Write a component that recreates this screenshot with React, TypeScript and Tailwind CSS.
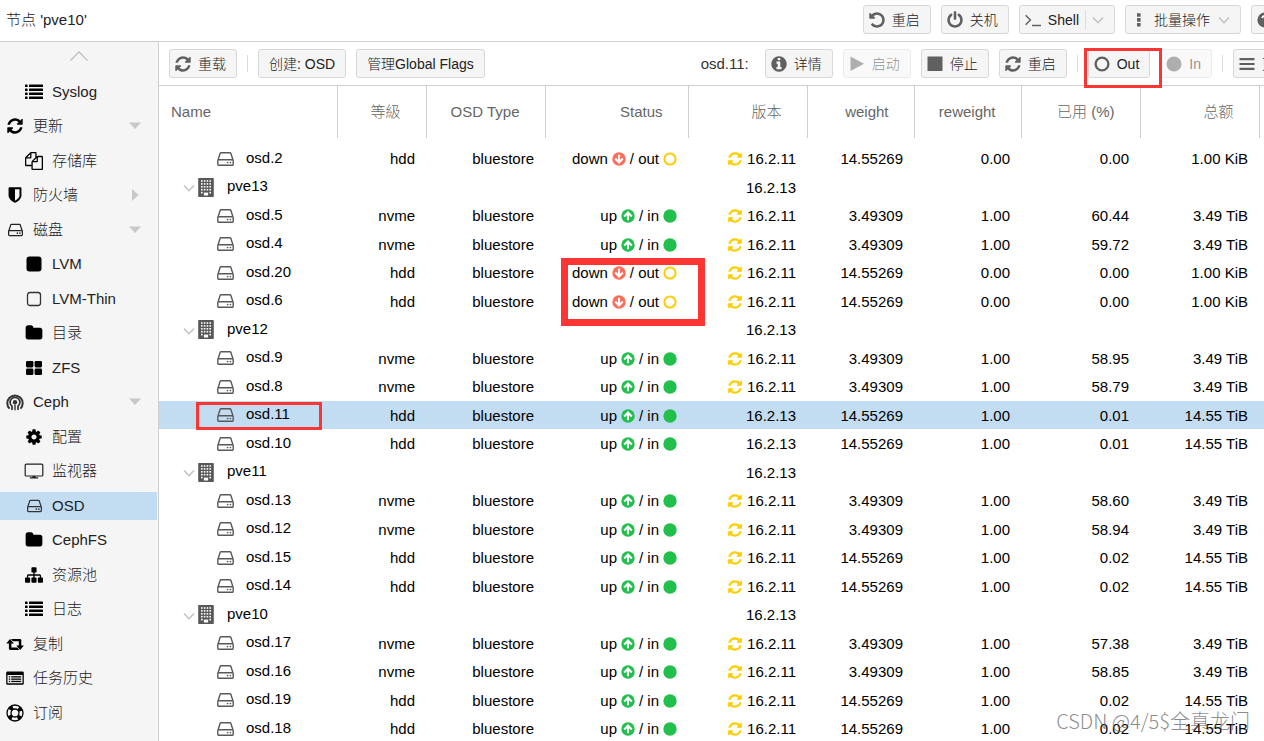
import React from "react";

type IconProps = { className?: string };

const PATHS = {
  undo: "M1664 896q0 156-61 298t-164 245-245 164-298 61q-172 0-327-72.5t-264-204.5q-7-10-6.5-22.5t8.5-20.5l137-138q10-9 25-9 16 2 23 12 73 95 179 147t225 52q104 0 198.5-40.5t163.5-109.5 109.5-163.5 40.5-198.5-40.5-198.5-109.5-163.5-163.5-109.5-198.5-40.5q-98 0-188 35.5t-160 101.5l137 138q31 30 14 69-17 40-59 40h-448q-26 0-45-19t-19-45v-448q0-42 40-59 39-17 69 14l130 129q107-101 244.5-156.5t284.5-55.5q156 0 298 61t245 164 164 245 61 298z",
  refresh:
    "M1639 1056q0 5-1 7-64 268-268 434.5t-478 166.5q-146 0-282.5-55t-243.5-157l-129 129q-19 19-45 19t-45-19-19-45v-448q0-26 19-45t45-19h448q26 0 45 19t19 45-19 45l-137 137q71 66 161 102t187 36q134 0 250-65t186-179q11-17 53-117 8-23 30-23h192q13 0 22.5 9.5t9.5 22.5zm25-800v448q0 26-19 45t-45 19h-448q-26 0-45-19t-19-45 19-45l138-138q-148-137-349-137-134 0-250 65t-186 179q-11 17-53 117-8 23-30 23h-199q-13 0-22.5-9.5t-9.5-22.5v-7q65-268 270-434.5t480-166.5q146 0 284 55.5t245 156.5l130-129q19-19 45-19t45 19 19 45z",
  power:
    "M1664 896q0 156-61 298t-164 245-245 164-298 61-298-61-245-164-164-245-61-298q0-182 80.5-343t226.5-270q43-32 95.5-25t83.5 50q32 42 24.5 94.5t-49.5 84.5q-98 74-151.5 181t-53.5 228q0 104 40.5 198.5t109.5 163.5 163.5 109.5 198.5 40.5 198.5-40.5 163.5-109.5 109.5-163.5 40.5-198.5q0-121-53.5-228t-151.5-181q-42-32-49.5-84.5t24.5-94.5q31-43 84-50t95 25q146 109 226.5 270t80.5 343zm-640-768v640q0 52-38 90t-90 38-90-38-38-90v-640q0-52 38-90t90-38 90 38 38 90z",
  info: "M1152 1376v-160q0-14-9-23t-23-9h-96v-512q0-14-9-23t-23-9h-320q-14 0-23 9t-9 23v160q0 14 9 23t23 9h96v320h-96q-14 0-23 9t-9 23v160q0 14 9 23t23 9h448q14 0 23-9t9-23zm-128-896v-160q0-14-9-23t-23-9h-192q-14 0-23 9t-9 23v160q0 14 9 23t23 9h192q14 0 23-9t9-23zm640 416q0 209-103 385.5t-279.5 279.5-385.5 103-385.5-103-279.5-279.5-103-385.5 103-385.5 279.5-279.5 385.5-103 385.5 103 279.5 279.5 103 385.5z",
  files:
    "M1696 384q40 0 68 28t28 68v1216q0 40-28 68t-68 28h-960q-40 0-68-28t-28-68v-288h-544q-40 0-68-28t-28-68v-672q0-40 20-88t48-76l408-408q28-28 76-48t88-20h416q40 0 68 28t28 68v328q68-40 128-40h416zm-544 213l-299 299h299v-299zm-640-384l-299 299h299v-299zm196 647l316-316v-416h-384v416q0 40-28 68t-68 28h-416v640h512v-256q0-40 20-88t48-76zm956 804v-1152h-384v416q0 40-28 68t-68 28h-416v640h896z",
  shield:
    "M1344 960v-640h-448v1137q119-63 213-137 235-184 235-360zm192-768v768q0 86-33.5 170.5t-83 150-118 127.5-126.5 103-121 77.5-89.5 49.5-42.5 20q-12 6-26 6t-26-6q-16-7-42.5-20t-89.5-49.5-121-77.5-126.5-103-118-127.5-83-150-33.5-170.5v-768q0-26 19-45t45-19h1152q26 0 45 19t19 45z",
  folder:
    "M1728 608v704q0 92-66 158t-158 66h-1216q-92 0-158-66t-66-158v-960q0-92 66-158t158-66h320q92 0 158 66t66 158v32h672q92 0 158 66t66 158z",
  gear: "M1152 896q0-106-75-181t-181-75-181 75-75 181 75 181 181 75 181-75 75-181zm512-109v222q0 12-8 23t-20 13l-185 28q-19 54-39 91 35 50 107 138 10 12 10 25t-9 23q-27 37-99 108t-94 71q-12 0-26-9l-138-108q-44 23-91 38-16 136-29 186-7 28-36 28h-222q-14 0-24.5-8.5t-11.5-21.5l-28-184q-49-16-90-37l-141 107q-10 9-25 9-14 0-25-11-126-114-165-168-7-10-7-23 0-12 8-23 15-21 51-66.5t54-70.5q-27-50-41-99l-183-27q-13-2-21-12.5t-8-23.5v-222q0-12 8-23t19-13l186-28q14-46 39-92-40-57-107-138-10-12-10-24 0-10 9-23 26-36 98.5-107.5t94.5-71.5q13 0 26 10l138 107q44-23 91-38 16-136 29-186 7-28 36-28h222q14 0 24.5 8.5t11.5 21.5l28 184q49 16 90 37l142-107q9-9 24-9 13 0 25 10 129 119 165 170 7 8 7 22 0 12-8 23-15 21-51 66.5t-54 70.5q26 50 41 98l183 28q13 2 21 12.5t8 23.5z",
  sitemap:
    "M1792 1248v320q0 40-28 68t-68 28h-320q-40 0-68-28t-28-68v-320q0-40 28-68t68-28h96v-192h-512v192h96q40 0 68 28t28 68v320q0 40-28 68t-68 28h-320q-40 0-68-28t-28-68v-320q0-40 28-68t68-28h96v-192h-512v192h96q40 0 68 28t28 68v320q0 40-28 68t-68 28h-320q-40 0-68-28t-28-68v-320q0-40 28-68t68-28h96v-192q0-52 38-90t90-38h512v-192h-96q-40 0-68-28t-28-68v-320q0-40 28-68t68-28h320q40 0 68 28t28 68v320q0 40-28 68t-68 28h-96v192h512q52 0 90 38t38 90v192h96q40 0 68 28t28 68z",
};

function Glyph({ name, className = "size-[18px]" }: IconProps & { name: keyof typeof PATHS }) {
  return (
    <svg viewBox="0 0 1792 1792" fill="currentColor" aria-hidden="true" className={`shrink-0 ${className}`}>
      <path d={PATHS[name]} />
    </svg>
  );
}

function Drive({ className = "" }: IconProps) {
  return (
    <svg viewBox="0 256 1536 1280" fill="currentColor" aria-hidden="true" className={`shrink-0 ${className}`}>
      <path d="M1040 1216q0 33-23.5 56.5t-56.5 23.5-56.5-23.5-23.5-56.5 23.5-56.5 56.5-23.5 56.5 23.5 23.5 56.5zm256 0q0 33-23.5 56.5t-56.5 23.5-56.5-23.5-23.5-56.5 23.5-56.5 56.5-23.5 56.5 23.5 23.5 56.5zm112 160v-320q0-13-9.5-22.5t-22.5-9.5h-1216q-13 0-22.5 9.5t-9.5 22.5v320q0 13 9.5 22.5t22.5 9.5h1216q13 0 22.5-9.5t9.5-22.5zm-1230-480h1180l-157-482q-4-13-16-21.5t-26-8.5h-782q-14 0-26 8.5t-16 21.5zm1358 160v320q0 66-47 113t-113 47h-1216q-66 0-113-47t-47-113v-320q0-25 16-75l197-606q17-53 63-86t101-33h782q55 0 101 33t63 86l197 606q16 50 16 75z" />
    </svg>
  );
}

function Small({ children, className = "size-[18px]" }: { children: React.ReactNode; className?: string }) {
  return (
    <svg viewBox="0 0 18 18" fill="currentColor" aria-hidden="true" className={`shrink-0 ${className}`}>
      {children}
    </svg>
  );
}

const ListIcon = () => (
  <Small>
    {[2, 6, 10, 14].map((y) => (
      <g key={y}>
        <rect x="0" y={y - 0.5} width="2.6" height="2.6" rx="0.4" />
        <rect x="4" y={y - 0.5} width="14" height="2.6" rx="0.4" />
      </g>
    ))}
  </Small>
);
const SquareIcon = () => (
  <Small>
    <rect x="1.5" y="1.5" width="15" height="15" rx="3" />
  </Small>
);
const SquareOutline = () => (
  <Small>
    <rect x="2.5" y="2.5" width="13" height="13" rx="2.5" fill="none" stroke="#333" strokeWidth="1.3" />
  </Small>
);
const GridIcon = () => (
  <Small>
    <rect x="1" y="2" width="7.4" height="6.4" rx="1.3" />
    <rect x="9.6" y="2" width="7.4" height="6.4" rx="1.3" />
    <rect x="1" y="9.6" width="7.4" height="6.4" rx="1.3" />
    <rect x="9.6" y="9.6" width="7.4" height="6.4" rx="1.3" />
  </Small>
);
const CephIcon = () => (
  <Small>
    <g fill="none" stroke="#333">
      <path d="M3.6 15.6A7.7 7.7 0 1 1 14.4 15.6" strokeWidth="2" />
      <path d="M6 17V13.2A4.9 4.9 0 1 1 12 13.2V17" strokeWidth="1.7" />
      <path d="M9 11.5V17.2" strokeWidth="1.4" />
    </g>
    <circle cx="9" cy="9.300" r="2.200" fill="#333" />
  </Small>
);
const MonitorIcon = () => (
  <svg viewBox="0 0 20 18" aria-hidden="true" className="h-[18px] w-5 shrink-0">
    <rect x="1.2" y="2.2" width="17.6" height="11.8" rx="1" fill="none" stroke="#222" strokeWidth="1.2" />
    <path d="M8.6 14h2.8l.4 1.3h2.4v1.300H5.8v-1.300h2.4z" fill="#222" />
  </svg>
);
const RetweetIcon = () => (
  <Small>
    <path d="M4 3.9 7.9 8.6H5.4V12.6H11.4L13.2 14.9H4.2Q2.9 14.9 2.9 13.6V8.6H0.3Z" />
    <path d="M14.2 15.1 10.3 10.4H12.8V6.3H6.8L5 4H14Q15.3 4 15.3 5.3V10.4H17.9Z" />
  </Small>
);
const ListAltIcon = () => (
  <Small>
    <path
      fillRule="evenodd"
      d="M1.5 2.5h15a1.3 1.3 0 0 1 1.3 1.3v10.6a1.3 1.3 0 0 1-1.3 1.3h-15a1.3 1.3 0 0 1-1.3-1.3V3.8a1.3 1.3 0 0 1 1.3-1.3zM1.5 6v8.2h15V6z"
    />
    {[7.2, 9.5, 11.8].map((y) => (
      <g key={y}>
        <rect x="2.8" y={y} width="1.4" height="1.3" />
        <rect x="5.2" y={y} width="10" height="1.3" />
      </g>
    ))}
  </Small>
);
const LifeRing = () => (
  <Small>
    <circle cx="9" cy="9" r="8" fill="none" stroke="currentColor" strokeWidth="1.3" />
    <circle cx="9" cy="9" r="4" fill="none" stroke="currentColor" strokeWidth="1.3" />
    <circle cx="9" cy="9" r="6" fill="none" stroke="currentColor" strokeWidth="4.6" strokeDasharray="3.6 5.825" strokeDashoffset="-2.9" />
  </Small>
);
const StopIcon = () => (
  <Small>
    <rect x="1.5" y="1.5" width="15" height="14.5" />
  </Small>
);
const PlayIcon = () => (
  <Small>
    <path d="M2.5 1.5 16 8.7 2.5 16z" />
  </Small>
);
const CircleOutline = () => (
  <Small>
    <circle cx="9" cy="9" r="6.4" fill="none" stroke="currentColor" strokeWidth="2.3" />
  </Small>
);
const CircleSolid = () => (
  <Small>
    <circle cx="9" cy="9" r="7.5" />
  </Small>
);
const BarsIcon = () => (
  <Small>
    <path d="M1.5 3h15v2.2h-15zM1.5 7.9h15v2.2h-15zM1.5 12.8h15V15h-15z" />
  </Small>
);
const TerminalIcon = () => (
  <Small>
    <path d="M1.6 4.3 6.4 9l-4.8 4.7M8 14.5h9" fill="none" stroke="currentColor" strokeWidth="1.4" />
  </Small>
);
const DotsIcon = () => (
  <Small>
    <path d="M7 2.2h3.6v3.6H7zM7 7.1h3.6v3.6H7zM7 12h3.6v3.6H7z" />
  </Small>
);
const HelpIcon = () => (
  <Small>
    <circle cx="9" cy="9" r="7.6" />
    <path d="M6.3 7.2Q6.5 4.8 9 4.8t2.6 2.2Q11.6 8.5 9 9.8V11" fill="none" stroke="#f5f5f5" strokeWidth="2" />
    <path d="M8 12.3h2v1.9H8z" fill="#f5f5f5" />
  </Small>
);
const ChevronDown = ({ className = "" }: IconProps) => (
  <svg viewBox="0 0 12 12" fill="none" stroke="#c0c0c0" strokeWidth="1.4" aria-hidden="true" className={`size-3 shrink-0 ${className}`}>
    <path d="M1 3.5 6 8.8 11 3.5" />
  </svg>
);
const BuildingIcon = () => (
  <svg viewBox="0 0 16 19" aria-hidden="true" className="h-[19px] w-4 shrink-0">
    <rect x="0.2" width="15.6" height="19" rx="0.7" fill="#585858" />
    {[2.2, 5.1, 8, 10.9].map((y) =>
      [3, 5.8, 8.6, 11.4].map((x) => <rect key={`${x}-${y}`} x={x} y={y} width="1.6" height="1.6" fill="#fff" />),
    )}
    <rect x="3" y="13.8" width="1.6" height="1.6" fill="#fff" />
    <rect x="11.4" y="13.8" width="1.6" height="1.6" fill="#fff" />
    <rect x="5.9" y="14.6" width="4.200" height="2.900" fill="#fff" />
  </svg>
);

function ArrowCircle({ up }: { up: boolean }) {
  return (
    <svg viewBox="0 0 14 14" aria-hidden="true" className={`size-3.5 shrink-0 ${up ? "text-[#21bf4b]" : "rotate-180 text-[#ff6c59]"}`}>
      <circle cx="7" cy="7" r="6.7" fill="currentColor" />
      <path d="M7 11.3V4M3.2 7.4 7 3.6l3.8 3.8" fill="none" stroke="#fff" strokeWidth="2.1" />
    </svg>
  );
}

function StateDot({ filled }: { filled: boolean }) {
  return (
    <svg viewBox="0 0 14 14" aria-hidden="true" className="size-3.5 shrink-0">
      {filled ? (
        <circle cx="7" cy="7" r="6.7" fill="#21bf4b" />
      ) : (
        <circle cx="7" cy="7" r="5.6" fill="none" stroke="#ffcc00" strokeWidth="2" />
      )}
    </svg>
  );
}

type NavItem = { label: string; icon: React.ReactNode; child?: boolean; arrow?: "down" | "right"; active?: boolean };

const NAV: NavItem[] = [
  { label: "Syslog", icon: <ListIcon />, child: true },
  { label: "更新", icon: <Glyph name="refresh" />, arrow: "down" },
  { label: "存储库", icon: <Glyph name="files" />, child: true },
  { label: "防火墙", icon: <Glyph name="shield" />, arrow: "right" },
  { label: "磁盘", icon: <Drive className="h-3.5 w-[15px] text-[#222]" />, arrow: "down" },
  { label: "LVM", icon: <SquareIcon />, child: true },
  { label: "LVM-Thin", icon: <SquareOutline />, child: true },
  { label: "目录", icon: <Glyph name="folder" />, child: true },
  { label: "ZFS", icon: <GridIcon />, child: true },
  { label: "Ceph", icon: <CephIcon />, arrow: "down" },
  { label: "配置", icon: <Glyph name="gear" />, child: true },
  { label: "监视器", icon: <MonitorIcon />, child: true },
  { label: "OSD", icon: <Drive className="h-3.5 w-[15px] text-[#333]" />, child: true, active: true },
  { label: "CephFS", icon: <Glyph name="folder" />, child: true },
  { label: "资源池", icon: <Glyph name="sitemap" />, child: true },
  { label: "日志", icon: <ListIcon />, child: true },
  { label: "复制", icon: <RetweetIcon /> },
  { label: "任务历史", icon: <ListAltIcon /> },
  { label: "订阅", icon: <LifeRing /> },
];

function Sidebar() {
  return (
    <nav className="flex w-[159px] shrink-0 flex-col overflow-hidden border-r border-[#cfcfcf] bg-[#f5f5f5]">
      <button type="button" aria-label="向上滚动" className="flex h-8 shrink-0 items-center justify-center pb-1">
        <svg viewBox="0 0 18 10" fill="none" stroke="#c0c0c0" strokeWidth="1.3" aria-hidden="true" className="h-2.5 w-[18px]">
          <path d="M0.5 9.5 9 1l8.5 8.5" />
        </svg>
      </button>
      <ul>
        {NAV.map((item, i) => (
          <li key={i} className="flex items-center pr-px odd:h-[35px] even:h-[34px]">
            <a
              href={`#${item.label}`}
              className={`flex h-7 flex-1 items-center pr-[15px] ${item.child ? "pl-6" : "pl-[5px]"} ${item.active ? "bg-[#c2ddf2]" : ""}`}
            >
              <span className="flex w-5 justify-center">{item.icon}</span>
              <span className="flex-1 pl-2 text-[#222]">{item.label}</span>
              {item.arrow && (
                <svg viewBox="0 0 14 14" fill="#c8c8c8" aria-hidden="true" className="size-3.5">
                  {item.arrow === "down" ? <path d="M1 3.5h12L7 10z" /> : <path d="M4 1v12l6.5-6z" />}
                </svg>
              )}
            </a>
          </li>
        ))}
      </ul>
    </nav>
  );
}

function Button({ icon, label, disabled, children }: { icon?: React.ReactNode; label: string; disabled?: boolean; children?: React.ReactNode }) {
  return (
    <button
      type="button"
      disabled={disabled}
      className={`flex h-[29px] shrink-0 items-center gap-1.5 whitespace-nowrap rounded-[3px] border border-[#d8d8d8] bg-[#f5f5f5] pr-2.5 text-sm text-[#222] disabled:opacity-50 ${icon ? "pl-1" : "pl-2.5"}`}
    >
      {icon && <span className="text-[#606060]">{icon}</span>}
      <span>{label}</span>
      {children}
    </button>
  );
}

const Separator = () => <span className="h-[17px] w-px shrink-0 bg-[#dcdcdc]" />;

function TopBar() {
  return (
    <header className="flex h-[42px] shrink-0 items-center gap-2.5 border-b border-[#cfcfcf] pb-0.5 pl-1.5">
      <h1 className="flex-1 whitespace-nowrap text-[15px] text-[#222]">节点 'pve10'</h1>
      <Button icon={<Glyph name="undo" />} label="重启" />
      <Button icon={<Glyph name="power" />} label="关机" />
      <Button icon={<TerminalIcon />} label="Shell">
        <span className="h-5 w-px bg-[#dcdcdc]" />
        <ChevronDown />
      </Button>
      <Button icon={<DotsIcon />} label="批量操作">
        <ChevronDown className="ml-0.5" />
      </Button>
      <div className="w-[13px] overflow-hidden">
        <Button icon={<HelpIcon />} label="帮助" />
      </div>
    </header>
  );
}

function Toolbar() {
  return (
    <div role="toolbar" className="flex h-11 shrink-0 items-center gap-2.5 border-b border-[#cfcfcf] pl-2.5">
      <Button icon={<Glyph name="refresh" />} label="重载" />
      <Separator />
      <Button label="创建: OSD" />
      <Button label="管理Global Flags" />
      <span className="flex-1 pr-1.5 text-right text-[#333]">osd.11:</span>
      <Button icon={<Glyph name="info" />} label="详情" />
      <Button icon={<PlayIcon />} label="启动" disabled />
      <Button icon={<StopIcon />} label="停止" />
      <Button icon={<Glyph name="refresh" />} label="重启" />
      <Separator />
      <div className="relative">
        <Button icon={<CircleOutline />} label="Out" />
        <span className="pointer-events-none absolute -left-1 -top-px z-10 h-10 w-[78px] border-3 border-[#fb3434]" />
      </div>
      <Button icon={<CircleSolid />} label="In" disabled />
      <Separator />
      <div className="w-[31px] overflow-hidden">
        <Button icon={<BarsIcon />} label="更多" />
      </div>
    </div>
  );
}

type Osd = { name: string; kind: "hdd" | "nvme"; reweight: string; used: string; total: string; version: string; up: boolean };
type Row = { host: string } | Osd;

const osd = (id: number, kind: "hdd" | "nvme", used: string, version = "16.2.11", up = true): Osd => ({
  name: `osd.${id}`,
  kind,
  used,
  version,
  up,
  reweight: up ? "1.00" : "0.00",
  total: !up ? "1.00 KiB" : kind === "nvme" ? "3.49 TiB" : "14.55 TiB",
});

const ROWS: Row[] = [
  osd(2, "hdd", "0.00", "16.2.11", false),
  { host: "pve13" },
  osd(5, "nvme", "60.44"),
  osd(4, "nvme", "59.72"),
  osd(20, "hdd", "0.00", "16.2.11", false),
  osd(6, "hdd", "0.00", "16.2.11", false),
  { host: "pve12" },
  osd(9, "nvme", "58.95"),
  osd(8, "nvme", "58.79"),
  osd(11, "hdd", "0.01", "16.2.13"),
  osd(10, "hdd", "0.01", "16.2.13"),
  { host: "pve11" },
  osd(13, "nvme", "58.60"),
  osd(12, "nvme", "58.94"),
  osd(15, "hdd", "0.02"),
  osd(14, "hdd", "0.02"),
  { host: "pve10" },
  osd(17, "nvme", "57.38"),
  osd(16, "nvme", "58.85"),
  osd(19, "hdd", "0.02"),
  osd(18, "hdd", "0.02"),
];

const HEADERS = ["等級", "OSD Type", "Status", "版本", "weight", "reweight", "已用 (%)", "总额"];

const CELL = "pr-[11px] pt-px text-right whitespace-nowrap";

function HostRow({ host }: { host: string }) {
  return (
    <tr className="odd:h-[29px] even:h-7">
      <td className="pl-6">
        <span className="flex items-center">
          <ChevronDown className="mt-0.5" />
          <span className="pl-[3px]">
            <BuildingIcon />
          </span>
          <span className="pb-0.5 pl-[13px]">{host}</span>
        </span>
      </td>
      <td colSpan={3} />
      <td className={CELL}>16.2.13</td>
      <td colSpan={5} />
    </tr>
  );
}

function OsdRow({ row }: { row: Osd }) {
  return (
    <tr className={`odd:h-[29px] even:h-7 ${row.name === "osd.11" ? "bg-[#c2ddf2]" : ""}`}>
      <td className="relative pl-[58px]">
        <span className="flex items-center">
          <Drive className="h-3.5 w-[17px] text-[#585858]" />
          <span className="pb-0.5 pl-3">{row.name}</span>
        </span>
        {row.name === "osd.11" && (
          <span className="pointer-events-none absolute left-[37px] top-px z-10 h-7 w-[126px] border-3 border-[#fb3434]" />
        )}
      </td>
      <td className={CELL}>{row.kind}</td>
      <td className={CELL}>bluestore</td>
      <td className={`relative ${CELL}`}>
        <span className="flex items-center justify-end gap-1">
          {row.up ? "up" : "down"}
          <ArrowCircle up={row.up} />
          {row.up ? "/ in" : "/ out"}
          <StateDot filled={row.up} />
        </span>
        {row.name === "osd.20" && (
          <span className="pointer-events-none absolute left-4 top-0 z-10 h-[68px] w-36 border-7 border-[#fb3434]" />
        )}
      </td>
      <td className={CELL}>
        <span className="flex items-center justify-end gap-1">
          {row.version === "16.2.11" && <Glyph name="refresh" className="size-4 text-[#ffcc00]" />}
          {row.version}
        </span>
      </td>
      <td className={CELL}>{row.kind === "nvme" ? "3.49309" : "14.55269"}</td>
      <td className={CELL}>{row.reweight}</td>
      <td className={CELL}>{row.used}</td>
      <td className={CELL}>{row.total}</td>
      <td />
    </tr>
  );
}

function OsdTable() {
  return (
    <div className="flex-1 overflow-hidden">
      <table className="w-full table-fixed border-collapse">
        <colgroup>
          <col className="w-[178px]" />
          <col className="w-[89px]" />
          <col className="w-[119px]" />
          <col className="w-[143px]" />
          <col className="w-[119px]" />
          <col className="w-[107px]" />
          <col className="w-[107px]" />
          <col className="w-[119px]" />
          <col className="w-[119px]" />
          <col />
        </colgroup>
        <thead>
          <tr className="h-[52px] text-[#666]">
            <th className="border-r border-[#cfcfcf] pl-3 text-left font-light">Name</th>
            {HEADERS.map((h) => (
              <th key={h} className="whitespace-nowrap border-r border-[#cfcfcf] pr-[25px] text-right font-light">
                {h}
              </th>
            ))}
            <td />
          </tr>
          <tr className="h-1.5">
            <td colSpan={10} />
          </tr>
        </thead>
        <tbody>{ROWS.map((row, i) => ("host" in row ? <HostRow key={i} host={row.host} /> : <OsdRow key={i} row={row} />))}</tbody>
      </table>
    </div>
  );
}

export default function App() {
  return (
    <div className="relative flex h-screen flex-col overflow-hidden bg-white font-['Liberation_Sans','Noto_Sans_CJK_SC',sans-serif] text-[15px] font-light leading-5 text-black">
      <TopBar />
      <div className="flex min-h-0 flex-1">
        <Sidebar />
        <main className="flex min-w-0 flex-1 flex-col">
          <Toolbar />
          <OsdTable />
        </main>
      </div>
      <span className="pointer-events-none absolute bottom-1.5 right-3.5 font-['Noto_Sans_CJK_SC',sans-serif] text-xl leading-7 text-[#666]/75">
        CSDN @4/5$全真龙门
      </span>
    </div>
  );
}
